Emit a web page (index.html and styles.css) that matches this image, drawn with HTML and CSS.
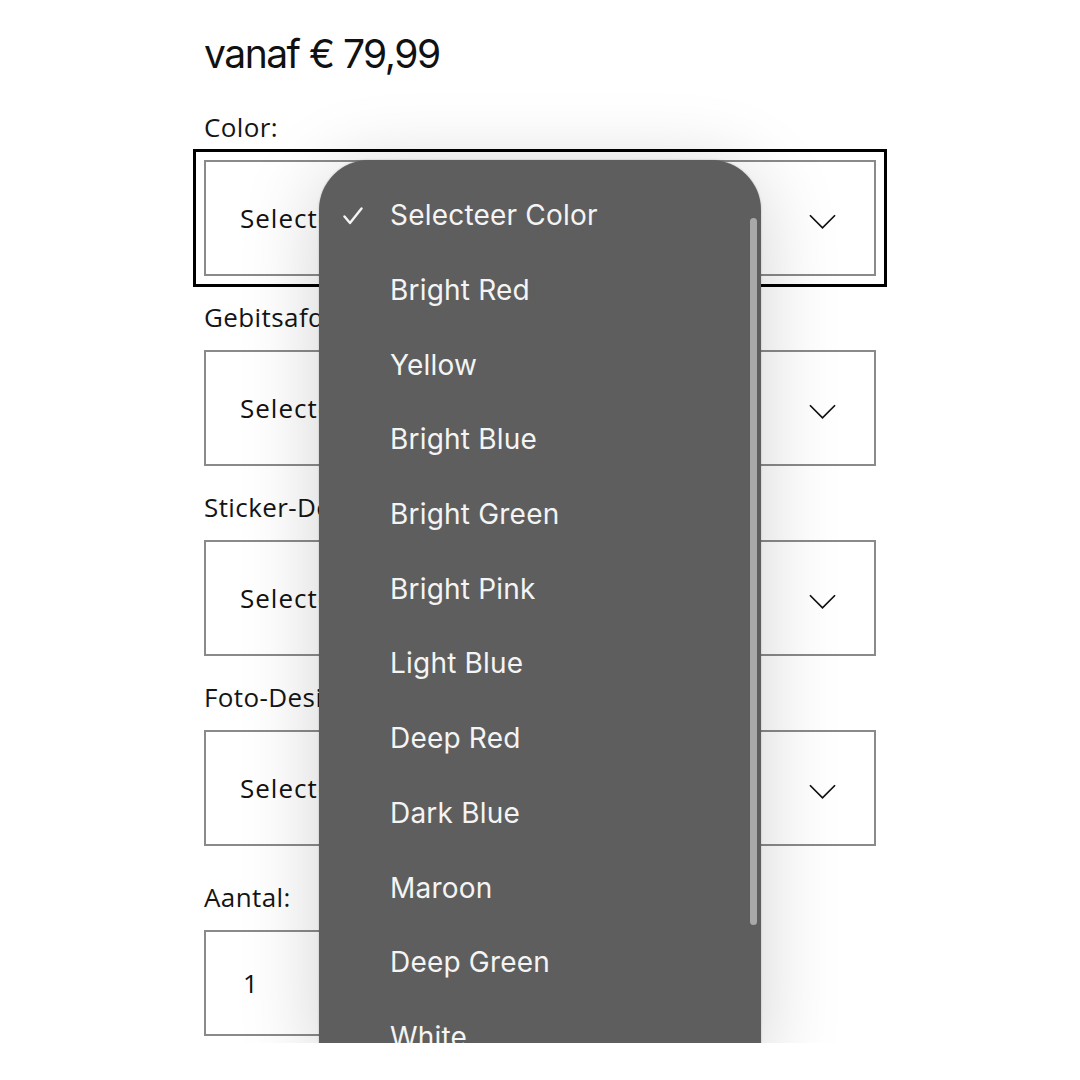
FILE: index.html
```html
<!DOCTYPE html>
<html lang="nl">
<head>
<meta charset="utf-8">
<title>Product opties</title>
<link rel="stylesheet" href="styles.css">
</head>
<body>
<div class="screen">
  <div class="page">
    <h1 class="price">vanaf € 79,99</h1>

    <div class="field">
      <label class="label">Color:</label>
      <div class="select focused">
        <span class="select-text">Selecteer Color</span>
        <svg class="chevron" viewBox="0 0 28 16" width="28" height="16"><polyline points="1,1 14,14 27,1" /></svg>
      </div>
    </div>

    <div class="field">
      <label class="label">Gebitsafdruk:</label>
      <div class="select">
        <span class="select-text">Selecteer Gebitsafdruk</span>
        <svg class="chevron" viewBox="0 0 28 16" width="28" height="16"><polyline points="1,1 14,14 27,1" /></svg>
      </div>
    </div>

    <div class="field">
      <label class="label">Sticker-Design:</label>
      <div class="select">
        <span class="select-text">Selecteer Sticker-Design</span>
        <svg class="chevron" viewBox="0 0 28 16" width="28" height="16"><polyline points="1,1 14,14 27,1" /></svg>
      </div>
    </div>

    <div class="field">
      <label class="label">Foto-Design:</label>
      <div class="select">
        <span class="select-text">Selecteer Foto-Design</span>
        <svg class="chevron" viewBox="0 0 28 16" width="28" height="16"><polyline points="1,1 14,14 27,1" /></svg>
      </div>
    </div>

    <div class="field qty-field">
      <label class="label">Aantal:</label>
      <div class="qty">1</div>
    </div>
  </div>

  <div class="dropdown">
    <ul class="options">
      <li class="option selected"><svg class="check" viewBox="0 0 20 18" width="20" height="18"><polyline points="1.5,9.5 7,16 18.5,1.5" /></svg>Selecteer Color</li>
      <li class="option">Bright Red</li>
      <li class="option">Yellow</li>
      <li class="option">Bright Blue</li>
      <li class="option">Bright Green</li>
      <li class="option">Bright Pink</li>
      <li class="option">Light Blue</li>
      <li class="option">Deep Red</li>
      <li class="option">Dark Blue</li>
      <li class="option">Maroon</li>
      <li class="option">Deep Green</li>
      <li class="option">White</li>
    </ul>
    <div class="scrollbar"></div>
  </div>
</div>
</body>
</html>
```

FILE: styles.css
```css
html, body {
  margin: 0;
  padding: 0;
  background: #ffffff;
}

.screen {
  position: relative;
  width: 1080px;
  height: 1043px;
  overflow: hidden;
  background: #ffffff;
}

.page {
  padding: 30px 0 0 204px;
  width: 672px;
  font-family: "Open Sans", "Lato", sans-serif;
  color: #111;
}

.price {
  margin: 0 0 32px 0;
  font-family: "Inter", "Liberation Sans", sans-serif;
  font-weight: 400;
  font-size: 39px;
  line-height: 48px;
  letter-spacing: -1.5px;
  color: #111;
}

.field {
  margin-bottom: 24px;
}

.qty-field {
  margin-top: 34px;
}

.label {
  display: block;
  font-size: 26px;
  line-height: 34px;
  letter-spacing: 0.4px;
  margin-bottom: 16px;
  color: #151515;
}

.select {
  box-sizing: border-box;
  height: 116px;
  border: 2px solid #8a8a8a;
  display: flex;
  align-items: center;
  justify-content: space-between;
  padding: 0 38px 0 34px;
  background: #fff;
}

.select.focused {
  outline: 3px solid #000;
  outline-offset: 8px;
}

.select-text {
  font-size: 26px;
  letter-spacing: 1px;
  color: #111;
  white-space: nowrap;
}

.chevron {
  display: block;
  width: 27px;
  height: 16px;
  margin-top: 8px;
}

.chevron polyline {
  fill: none;
  stroke: #111;
  stroke-width: 1.8;
}

.qty {
  box-sizing: border-box;
  width: 260px;
  height: 106px;
  border: 2px solid #8a8a8a;
  display: flex;
  align-items: center;
  padding-left: 37px;
  font-size: 26px;
  color: #111;
}

.dropdown {
  position: absolute;
  left: 319px;
  top: 160px;
  width: 442px;
  height: 900px;
  background: #5e5e5e;
  border-radius: 50px 50px 0 0;
  box-shadow: 0 10px 80px rgba(0, 0, 0, 0.18), 0 0 2px rgba(0, 0, 0, 0.25);
  font-family: "Inter", "Roboto", sans-serif;
  color: #f4f4f4;
}

.options {
  list-style: none;
  margin: 0;
  padding: 18px 0 0 0;
}

.option {
  position: relative;
  height: 74.7px;
  display: flex;
  align-items: center;
  padding-left: 71px;
  font-size: 28px;
  letter-spacing: 0.2px;
}

.check {
  position: absolute;
  left: 24px;
  top: 29px;
}

.check polyline {
  fill: none;
  stroke: #f4f4f4;
  stroke-width: 2.4;
  stroke-linecap: round;
  stroke-linejoin: round;
}

.scrollbar {
  position: absolute;
  right: 4px;
  top: 58px;
  width: 7px;
  height: 707px;
  border-radius: 4px;
  background: #a9a9a9;
}
```
